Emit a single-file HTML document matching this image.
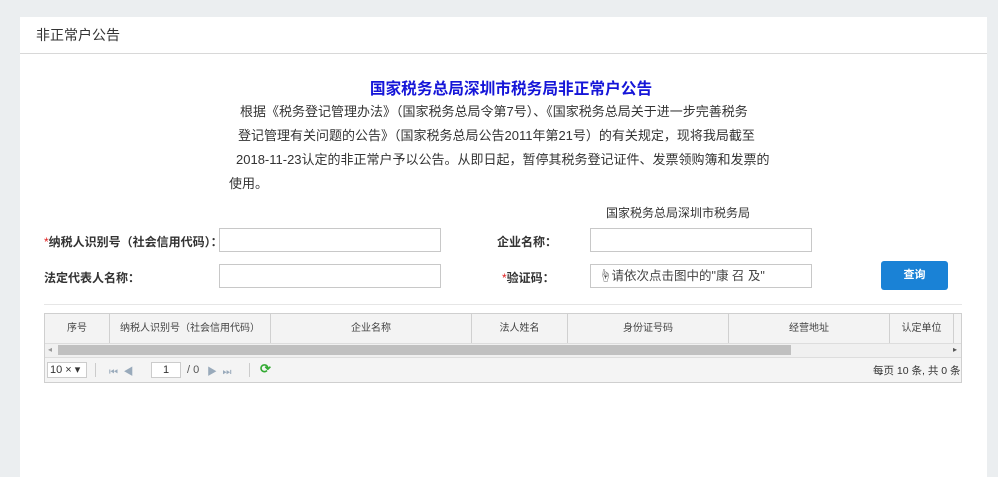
<!DOCTYPE html>
<html><head><meta charset="utf-8"><style>
*{margin:0;padding:0;box-sizing:border-box}
body{width:998px;height:467px;background:#ebeef0;font-family:"Liberation Sans","Noto Sans CJK SC",sans-serif;font-size:12px;color:#333;position:relative;overflow:hidden}
.panel{position:absolute;left:20px;top:17px;width:967px;height:460px;background:#fff}
.hd{height:37px;border-bottom:1px solid #d8d8d8;padding-left:16px;line-height:37px;font-size:14px;color:#333}
.a{position:absolute;white-space:nowrap}
.title{left:0;width:1022px;text-align:center;top:76px;font-size:15.7px;font-weight:bold;color:#1515d8}
.p{font-size:13px;color:#333;line-height:24px}
.lbl{font-weight:bold;font-size:12px;color:#333}
.lbl i{color:#e02020;font-style:normal;font-weight:normal}
.inp{position:absolute;border:1px solid #c8c8c8;background:#fff;height:24px}
.btn{position:absolute;left:881px;top:261px;width:67px;height:29px;background:#1a82d6;border-radius:3px;color:#fff;font-size:11px;font-weight:bold;text-align:center;line-height:29px}
.grid{position:absolute;left:44px;top:313px;width:918px;height:70px;border:1px solid #cfcfcf;background:#f4f4f4}
.th{position:absolute;top:0;height:29px;border-right:1px solid #d0d0d0;text-align:center;line-height:29px;font-size:10px;color:#444;background:#f3f3f3}
</style></head><body>
<div class="panel"><div class="hd">非正常户公告</div></div>
<div class="a title">国家税务总局深圳市税务局非正常户公告</div>
<div class="a p" style="left:240px;top:100px">根据《税务登记管理办法》（国家税务总局令第7号）、《国家税务总局关于进一步完善税务</div>
<div class="a p" style="left:238px;top:124px">登记管理有关问题的公告》（国家税务总局公告2011年第21号）的有关规定，现将我局截至</div>
<div class="a p" style="left:236px;top:148px">2018-11-23认定的非正常户予以公告。从即日起，暂停其税务登记证件、发票领购簿和发票的</div>
<div class="a p" style="left:229px;top:172px">使用。</div>
<div class="a" style="left:606px;top:204px;font-size:12px">国家税务总局深圳市税务局</div>
<div class="a lbl" style="left:44px;top:233px"><i>*</i>纳税人识别号（社会信用代码）：</div>
<div class="inp" style="left:219px;top:228px;width:222px"></div>
<div class="a lbl" style="left:44px;top:269px">法定代表人名称：</div>
<div class="inp" style="left:219px;top:264px;width:222px"></div>
<div class="a lbl" style="left:497px;top:233px">企业名称：</div>
<div class="inp" style="left:590px;top:228px;width:222px"></div>
<div class="a lbl" style="left:502px;top:269px"><i>*</i>验证码：</div>
<div class="inp" style="left:590px;top:264px;width:222px;font-size:12.5px;line-height:22px;padding-left:8px;color:#444">☝请依次点击图中的"康 召 及"</div>
<div class="btn">查询</div>
<div class="a" style="left:44px;top:304px;width:918px;border-top:1px solid #e6e6e6"></div>
<div class="grid">
<div class="th" style="left:0;width:65px">序号</div>
<div class="th" style="left:65px;width:161px">纳税人识别号（社会信用代码）</div>
<div class="th" style="left:226px;width:201px">企业名称</div>
<div class="th" style="left:427px;width:96px">法人姓名</div>
<div class="th" style="left:523px;width:161px">身份证号码</div>
<div class="th" style="left:684px;width:161px">经营地址</div>
<div class="th" style="left:845px;width:64px">认定单位</div>
<div class="a" style="left:0;top:29px;width:916px;height:14px;background:#f0f0f0;border-top:1px solid #ddd"></div>
<div class="a" style="left:3px;top:31px;font-size:8px;color:#999">◂</div>
<div class="a" style="left:13px;top:31px;width:733px;height:10px;background:#c0c0c0"></div>
<div class="a" style="left:908px;top:31px;font-size:8px;color:#555">▸</div>
<div class="a" style="left:0;top:43px;width:916px;height:25px;border-top:1px solid #ddd;background:#f4f4f4"></div>
<div class="a" style="left:2px;top:48px;width:40px;height:16px;border:1px solid #ccc;background:#fff;font-size:11px;line-height:14px;padding-left:2px">10 × ▾</div>
<div class="a" style="left:50px;top:49px;height:14px;border-left:1px solid #ccc"></div>
<div class="a" style="left:64px;top:49px;font-size:10px;color:#9ab">⏮ &nbsp;◀</div>
<div class="a" style="left:106px;top:48px;width:30px;height:16px;border:1px solid #ccc;background:#fff;text-align:center;font-size:11px;line-height:14px">1</div>
<div class="a" style="left:142px;top:50px;font-size:11px;color:#555">/ 0</div>
<div class="a" style="left:162px;top:49px;font-size:10px;color:#9ab">▶ &nbsp;⏭</div>
<div class="a" style="left:204px;top:49px;height:14px;border-left:1px solid #ccc"></div>
<div class="a" style="left:215px;top:47px;font-size:13px;color:#3a3;font-weight:bold">⟳</div>
<div class="a" style="left:828px;top:49px;font-size:10.5px;color:#333">每页 10 条, 共 0 条</div>
</div>
</body></html>
